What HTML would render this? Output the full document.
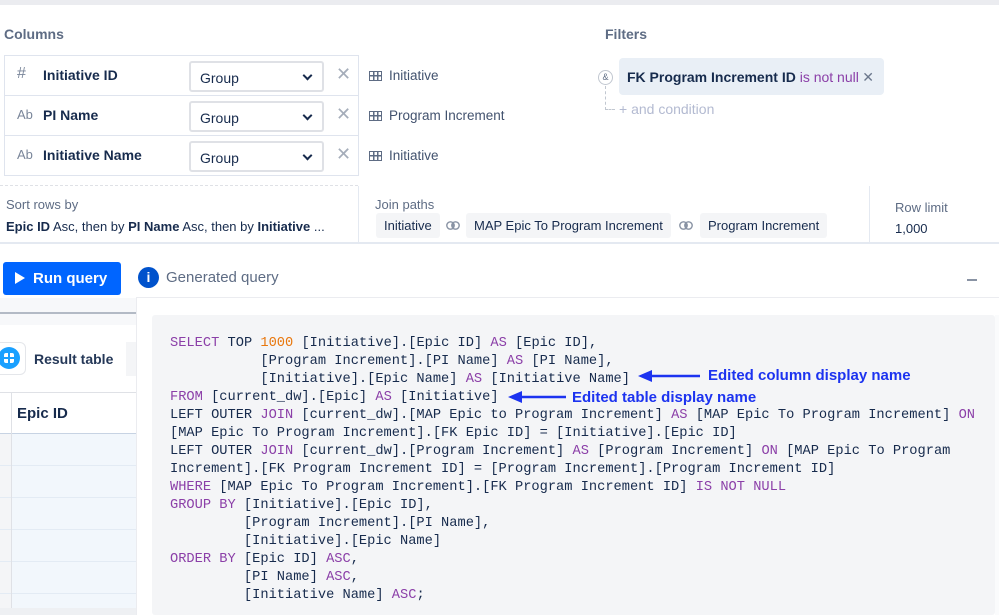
<!DOCTYPE html>
<html><head><meta charset="utf-8"><style>
*{box-sizing:border-box;margin:0;padding:0}
body{width:999px;height:615px;overflow:hidden;background:#fff;font-family:"Liberation Sans",sans-serif;position:relative;color:#172b4d}
.a{position:absolute}
.lbl{color:#5e6c84;font-size:14px}
.row{position:absolute;left:4px;width:355px;height:41px;border:1px solid #dfe4ee;background:#fff}
.row .ic{position:absolute;left:12px;top:11px;color:#7a869a;font-size:13px}
.row .nm{position:absolute;left:38px;top:11px;font-weight:bold;font-size:14px;color:#172b4d}
.sel{position:absolute;left:184px;top:5px;width:135px;height:31px;border:2px solid #dfe1e6;border-radius:3px;font-size:14px;padding:7px 0 0 9px;color:#172b4d}
.sel:after{content:"";position:absolute;right:11px;top:9px;width:5px;height:5px;border-right:2px solid #172b4d;border-bottom:2px solid #172b4d;transform:rotate(45deg)}
.x{position:absolute;left:331px;top:8px;color:#a5adba;font-size:18px}
.tb{position:absolute;left:369px;font-size:13.5px;color:#42526e}
.tbi{display:inline-block;width:13px;height:10px;border:1.5px solid #5e6c84;vertical-align:-1px;margin-right:7px;background:linear-gradient(#5e6c84,#5e6c84) 3px 0/1.5px 100% no-repeat,linear-gradient(#5e6c84,#5e6c84) 7px 0/1.5px 100% no-repeat,linear-gradient(#5e6c84,#5e6c84) 0 3px/100% 1.5px no-repeat}
.chip{position:absolute;top:213px;height:25px;background:#f4f5f7;border-radius:3px;font-size:13px;padding:5px 8px;color:#172b4d}
.ven{position:absolute;top:221px;width:14px;height:9px}
pre{font-family:"Liberation Mono",monospace;font-size:13.7px;line-height:18px;color:#172b4d}
.k{color:#8b3fa8}.n{color:#e8770d}
.ann{color:#1c33f0;font-weight:bold;font-size:15px}
</style></head><body>
<div class="a" style="left:0;top:0;width:999px;height:5px;background:#ebecf0"></div>
<div class="a lbl" style="left:4px;top:26px;font-weight:bold">Columns</div>
<div class="a lbl" style="left:605px;top:26px;font-weight:bold">Filters</div>

<div class="row" style="top:55px"><span class="ic" style="font-size:16px;top:9px">#</span><span class="nm">Initiative ID</span><div class="sel">Group</div><span class="x">✕</span></div>
<div class="row" style="top:95px"><span class="ic">Ab</span><span class="nm">PI Name</span><div class="sel">Group</div><span class="x">✕</span></div>
<div class="row" style="top:135px"><span class="ic">Ab</span><span class="nm">Initiative Name</span><div class="sel">Group</div><span class="x">✕</span></div>
<div class="tb" style="top:68px"><span class="tbi"></span>Initiative</div>
<div class="tb" style="top:108px"><span class="tbi"></span>Program Increment</div>
<div class="tb" style="top:148px"><span class="tbi"></span>Initiative</div>

<div class="a" style="left:598px;top:70px;width:15px;height:15px;border:1px solid #c1c7d0;border-radius:50%;font-size:9px;text-align:center;line-height:13px;color:#5e6c84">&amp;</div>
<div class="a" style="left:605px;top:86px;width:10px;height:24px;border-left:1px dashed #c1c7d0;border-bottom:1px dashed #c1c7d0"></div>
<div class="a" style="left:619px;top:58px;width:265px;height:37px;background:#e9eff6;border-radius:4px;font-size:14px;padding:11px 8px;font-weight:bold">FK Program Increment ID <span style="color:#8b3fa8;font-weight:normal">is not null</span><span style="position:absolute;right:10px;font-weight:normal;color:#6b778c">✕</span></div>
<div class="a" style="left:619px;top:101px;font-size:14px;color:#b3bad1">+ and condition</div>

<div class="a" style="left:0;top:185px;width:358px;border-top:1px dashed #dfe1e6"></div>
<div class="a" style="left:0;top:186px;width:999px;height:58px;border-bottom:2px solid #e4e9f1"></div>
<div class="a" style="left:358px;top:186px;width:1px;height:57px;background:#e4e9f1"></div>
<div class="a" style="left:869px;top:186px;width:1px;height:57px;background:#e4e9f1"></div>
<div class="a lbl" style="left:6px;top:197px;font-size:13px">Sort rows by</div>
<div class="a" style="left:6px;top:219px;font-size:13px;color:#172b4d"><b>Epic ID</b> Asc, then by <b>PI Name</b> Asc, then by <b>Initiative</b> ...</div>
<div class="a lbl" style="left:375px;top:197px;font-size:13px">Join paths</div>
<div class="chip" style="left:376px">Initiative</div>
<svg class="ven" style="left:446px" viewBox="0 0 14 9"><circle cx="4.5" cy="4.5" r="3.7" fill="none" stroke="#8993a4" stroke-width="1.4"/><circle cx="9.5" cy="4.5" r="3.7" fill="none" stroke="#8993a4" stroke-width="1.4"/><path d="M7 1.8a3.7 3.7 0 0 1 0 5.4a3.7 3.7 0 0 1 0-5.4z" fill="#8993a4"/></svg>
<div class="chip" style="left:466px">MAP Epic To Program Increment</div>
<svg class="ven" style="left:679px" viewBox="0 0 14 9"><circle cx="4.5" cy="4.5" r="3.7" fill="none" stroke="#8993a4" stroke-width="1.4"/><circle cx="9.5" cy="4.5" r="3.7" fill="none" stroke="#8993a4" stroke-width="1.4"/><path d="M7 1.8a3.7 3.7 0 0 1 0 5.4a3.7 3.7 0 0 1 0-5.4z" fill="#8993a4"/></svg>
<div class="chip" style="left:700px">Program Increment</div>
<div class="a lbl" style="left:895px;top:200px;font-size:13px">Row limit</div>
<div class="a" style="left:895px;top:221px;font-size:13px">1,000</div>

<div class="a" style="left:3px;top:262px;width:118px;height:33px;background:#0065ff;border-radius:3px;color:#fff;font-size:15px;font-weight:bold;padding:8px 0 0 12px"><span style="display:inline-block;width:0;height:0;border-left:10px solid #fff;border-top:6px solid transparent;border-bottom:6px solid transparent;margin-right:8px;vertical-align:-1px"></span>Run query</div>
<div class="a" style="left:138px;top:267px;width:21px;height:21px;border-radius:50%;background:#0052cc;color:#fff;font-size:14px;text-align:center;line-height:21px;font-weight:bold">i</div>
<div class="a" style="left:166px;top:269px;font-size:15px;color:#5e6c84">Generated query</div>
<div class="a" style="left:967px;top:279px;width:10px;height:1.5px;background:#8993a4"></div>

<div class="a" style="left:0;top:298px;width:136px;height:317px;background:#f7f8fa"></div>
<div class="a" style="left:0;top:312px;width:136px;height:2px;background:#b3bac5"></div>
<div class="a" style="left:0;top:325px;width:136px;height:68px;background:#fff"></div>
<div class="a" style="left:-10px;top:342px;width:36px;height:33px;background:#fff;border:1px solid #e4e6ea;border-radius:6px"></div>
<div class="a" style="left:-2px;top:347px;width:22px;height:22px;border-radius:50%;background:#1aa0ff"></div>
<div class="a" style="left:4px;top:353px;width:10px;height:10px;background:linear-gradient(#1aa0ff,#1aa0ff) 4px 0/2px 100% no-repeat,linear-gradient(#1aa0ff,#1aa0ff) 0 4px/100% 2px no-repeat,#fff;border-radius:2px"></div>
<div class="a" style="left:34px;top:351px;font-size:14px;font-weight:bold;color:#253858">Result table</div>
<div class="a" style="left:126px;top:342px;width:10px;height:34px;background:#f4f5f7"></div>
<div class="a" style="left:0;top:392px;width:136px;height:42px;background:#fff;border-top:1px solid #dfe1e6;border-bottom:1px solid #c7d3e3"></div>
<div class="a" style="left:11px;top:392px;width:1px;height:223px;background:#dfe1e6"></div>
<div class="a" style="left:17px;top:405px;font-size:15px;font-weight:bold">Epic ID</div>
<div class="a" style="left:12px;top:434px;width:124px;height:181px;background:#f2f7fc;background-image:repeating-linear-gradient(transparent 0 31px,#e3ebf4 31px 32px)"></div>
<div class="a" style="left:0;top:434px;width:11px;height:181px;background-image:repeating-linear-gradient(transparent 0 31px,#e3ebf4 31px 32px);background-color:#f4f5f7"></div>
<div class="a" style="left:0;top:608px;width:999px;height:7px;background:#eef0f3"></div>

<div class="a" style="left:136px;top:297px;width:863px;height:318px;background:#fff;border-left:1px solid #ebecf0;border-top:1px solid #ebecf0"></div>
<div class="a" style="left:152px;top:315px;width:843px;height:300px;background:#f4f5f7;border-radius:3px"></div>
<div class="a" style="left:995px;top:315px;width:4px;height:300px;background:#fafbfc"></div>
<pre class="a" style="left:170px;top:335px"><span class="k">SELECT</span> TOP <span class="n">1000</span> [Initiative].[Epic ID] <span class="k">AS</span> [Epic ID],
           [Program Increment].[PI Name] <span class="k">AS</span> [PI Name],
           [Initiative].[Epic Name] <span class="k">AS</span> [Initiative Name]
<span class="k">FROM</span> [current_dw].[Epic] <span class="k">AS</span> [Initiative]
LEFT OUTER <span class="k">JOIN</span> [current_dw].[MAP Epic to Program Increment] <span class="k">AS</span> [MAP Epic To Program Increment] <span class="k">ON</span>
[MAP Epic To Program Increment].[FK Epic ID] = [Initiative].[Epic ID]
LEFT OUTER <span class="k">JOIN</span> [current_dw].[Program Increment] <span class="k">AS</span> [Program Increment] <span class="k">ON</span> [MAP Epic To Program
Increment].[FK Program Increment ID] = [Program Increment].[Program Increment ID]
<span class="k">WHERE</span> [MAP Epic To Program Increment].[FK Program Increment ID] <span class="k">IS NOT NULL</span>
<span class="k">GROUP BY</span> [Initiative].[Epic ID],
         [Program Increment].[PI Name],
         [Initiative].[Epic Name]
<span class="k">ORDER BY</span> [Epic ID] <span class="k">ASC</span>,
         [PI Name] <span class="k">ASC</span>,
         [Initiative Name] <span class="k">ASC</span>;</pre>

<svg class="a" style="left:638px;top:369px" width="62" height="14"><path d="M62 7H10" stroke="#1c33f0" stroke-width="2.5"/><path d="M0 7L14 1V13Z" fill="#1c33f0"/></svg>
<div class="a ann" style="left:708px;top:367px">Edited column display name</div>
<svg class="a" style="left:508px;top:390px" width="58" height="14"><path d="M58 7H10" stroke="#1c33f0" stroke-width="2.5"/><path d="M0 7L14 1V13Z" fill="#1c33f0"/></svg>
<div class="a ann" style="left:572px;top:389px">Edited table display name</div>
</body></html>
